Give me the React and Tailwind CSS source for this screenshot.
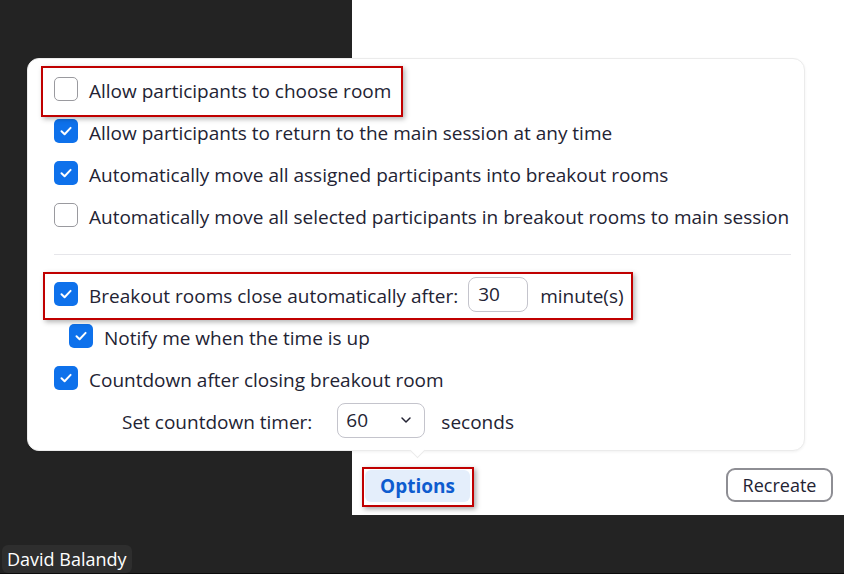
import React from "react";

const FONT = { fontFamily: '"Open Sans", "Noto Sans", sans-serif' };

function Check({ checked }) {
  if (checked) {
    return (
      <div className="w-[24px] h-[24px] shrink-0 rounded-[5px] bg-[#0e71eb] flex items-center justify-center">
        <svg width="16" height="16" viewBox="0 0 16 16" fill="none">
          <path d="M3.5 8.3 L6.6 11.2 L12.6 4.9" stroke="white" strokeWidth="2" strokeLinecap="round" strokeLinejoin="round" />
        </svg>
      </div>
    );
  }
  return <div className="w-[24px] h-[24px] shrink-0 rounded-[5px] border-[1.5px] border-[#9a9a9f] bg-white" />;
}

function Row({ checked, children, indent = "pl-[26px]" }) {
  return (
    <div className={`h-[42px] flex items-center gap-[11px] ${indent}`}>
      <Check checked={checked} />
      <span className="whitespace-nowrap translate-y-[2px]">{children}</span>
    </div>
  );
}

export default function App() {
  return (
    <div
      className="w-[844px] h-[574px] bg-[#232323] relative overflow-hidden flex flex-col border-b border-[#0c0c0c] text-[#232333]"
      style={FONT}
    >
      <div className="flex">
        <div className="w-[352px] shrink-0" />
        <div className="flex-1 h-[515px] bg-white flex items-end justify-between pl-[10px] pr-[11px] pb-[8px]">
          <div className="border-2 border-[#c00000] pl-px pr-[2px] pt-px pb-[3px] shadow-[2px_2px_5px_rgba(0,0,0,0.35)]">
            <div className="w-[105px] h-[32px] rounded-[6px] bg-[#e4eefb] flex items-center justify-center text-[19px] font-bold text-[#0e5ccf]">
              Options
            </div>
          </div>
          <div className="mb-[5px] w-[107px] h-[34px] rounded-[9px] border-2 border-[#8e8e94] flex items-center justify-center text-[18px] text-[#232333]">
            Recreate
          </div>
        </div>
      </div>
      <div className="mt-[30px] ml-[2px] w-[130px] h-[32px] rounded-[6px] bg-[#2e2e2e] text-white text-[18px] pl-[5px] flex items-center">
        David Balandy
      </div>

      {/* popover */}
      <div className="absolute left-[27px] top-[58px] w-[778px] h-[393px] bg-white rounded-[12px] border border-[#ebebeb] shadow-[0_1px_3px_rgba(0,0,0,0.06)] text-[19px] pt-[9px]">
        <Row checked={false}>Allow participants to choose room</Row>
        <Row checked>Allow participants to return to the main session at any time</Row>
        <Row checked>Automatically move all assigned participants into breakout rooms</Row>
        <Row checked={false}>Automatically move all selected participants in breakout rooms to main session</Row>
        <div className="mt-[18px] mb-[18px] ml-[26px] mr-[13px] h-px bg-[#e6e6ea]" />
        <div className="h-[42px] flex items-center pl-[26px]">
          <Check checked />
          <span className="ml-[11px] whitespace-nowrap translate-y-[2px]">Breakout rooms close automatically after:</span>
          <div className="ml-[10px] w-[60px] h-[35px] rounded-[8px] border border-[#c4c4cc] flex items-center pl-[9px]">30</div>
          <span className="ml-[12px] translate-y-[2px]">minute(s)</span>
        </div>
        <Row checked indent="pl-[41px]">Notify me when the time is up</Row>
        <Row checked>Countdown after closing breakout room</Row>
        <div className="h-[42px] flex items-center pl-[94px]">
          <span className="whitespace-nowrap translate-y-[2px]">Set countdown timer:</span>
          <div className="ml-[25px] w-[88px] h-[35px] rounded-[8px] border border-[#c4c4cc] flex items-center justify-between pl-[8px] pr-[12px]">
            <span>60</span>
            <svg width="12" height="8" viewBox="0 0 12 8" fill="none">
              <path d="M2 2 L6 6 L10 2" stroke="#232333" strokeWidth="1.5" strokeLinecap="round" strokeLinejoin="round" />
            </svg>
          </div>
          <span className="ml-[16px] translate-y-[2px]">seconds</span>
        </div>

        {/* arrow notch */}
        <div className="absolute left-[384px] bottom-[-6px] w-[11px] h-[11px] bg-white rotate-45 border-r border-b border-[#ebebeb]" />

        {/* annotation boxes */}
        <div className="absolute left-[13px] top-[7px] w-[362px] h-[51px] border-2 border-[#c00000] shadow-[2px_2px_5px_rgba(0,0,0,0.3)] pointer-events-none" />
        <div className="absolute left-[15px] top-[213px] w-[590px] h-[48px] border-2 border-[#c00000] shadow-[2px_2px_5px_rgba(0,0,0,0.3)] pointer-events-none" />
      </div>
    </div>
  );
}
